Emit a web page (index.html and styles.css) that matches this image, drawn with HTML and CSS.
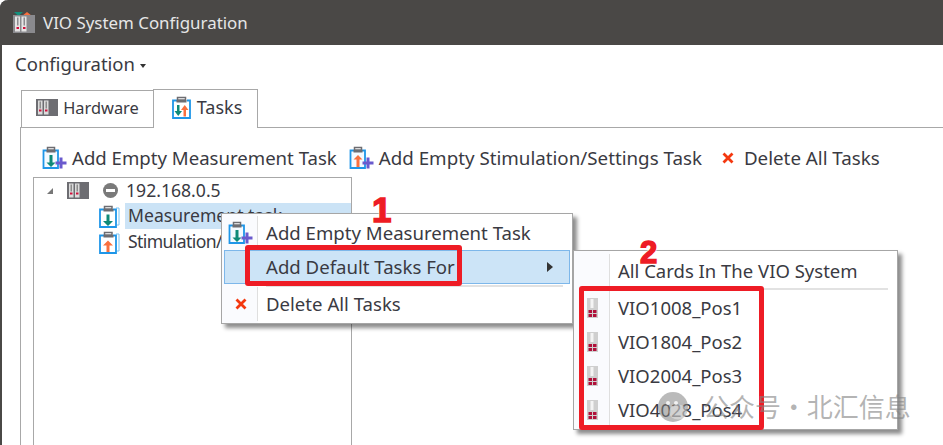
FILE: index.html
```html
<!DOCTYPE html>
<html lang="en">
<head>
<meta charset="UTF-8">
<meta name="viewport" content="width=device-width, initial-scale=1.0">
<title>VIO System Configuration</title>
<link rel="stylesheet" href="styles.css">
</head>
<body>
<svg class="defs" width="0" height="0">
  <symbol id="rack" viewBox="0 0 22 17">
    <rect width="22" height="17" fill="#6d6d72"/>
    <rect x="2" y="1.5" width="4.5" height="14" fill="#dcdcdc"/>
    <rect x="8" y="1.5" width="4.500" height="14" fill="#dcdcdc"/>
    <rect x="3.500" y="2.500" width="1.500" height="7" fill="#8c8c8c"/>
    <rect x="9.500" y="2.500" width="1.500" height="7" fill="#8c8c8c"/>
    <rect x="3" y="10.500" width="2.500" height="2" fill="#d0103c"/>
    <rect x="9" y="10.500" width="2.500" height="2" fill="#d0103c"/>
  </symbol>
  <symbol id="task-down" viewBox="0 0 24 24">
    <path d="M18 4h3v17h-2" fill="none" stroke="#7cc4f2"/>
    <path d="M6 5.500H2V23h16V5.500h-3" fill="#fff" stroke="#1e96e8" stroke-width="1.800"/>
    <path d="M6.500 5V2.500h7.500V5z" fill="#fff" stroke="#6d6d72" stroke-width="1.500"/>
    <rect x="5.500" y="5" width="10" height="2.500" fill="#6d6d72"/>
    <path d="M8.500 10.500h3v6.500H15l-5 5-5-5h3.500z" fill="#0f8a78"/>
  </symbol>
  <symbol id="task-up" viewBox="0 0 24 24">
    <path d="M18 4h3v17h-2" fill="none" stroke="#7cc4f2"/>
    <path d="M6 5.500H2V23h16V5.500h-3" fill="#fff" stroke="#1e96e8" stroke-width="1.800"/>
    <path d="M6.500 5V2.500h7.500V5z" fill="#fff" stroke="#6d6d72" stroke-width="1.500"/>
    <rect x="5.500" y="5" width="10" height="2.500" fill="#6d6d72"/>
    <path d="M8.500 22h3v-6.500H15l-5-5-5 5h3.500z" fill="#f9703e"/>
  </symbol>
  <symbol id="task-both" viewBox="0 0 20 23">
    <path d="M5 4.500H1V22h17V4.500h-3" fill="#fff" stroke="#1e96e8" stroke-width="1.800"/>
    <path d="M5.500 4V1.500h8V4z" fill="#fff" stroke="#6d6d72" stroke-width="1.500"/>
    <rect x="4.500" y="4" width="10" height="2.500" fill="#6d6d72"/>
    <path d="M5 9h2.500v6H10l-3.750 5-3.750-5H5z" fill="#0f8a78"/>
    <path d="M11.500 20.500H14v-6.500h2.500l-3.750-5L9 14h2.500z" fill="#f9703e"/>
  </symbol>
  <symbol id="add-down" viewBox="0 0 25 25">
    <path d="M5 4.500H1.500V22H16V4.500h-3" fill="#f4faff" stroke="#1e96e8" stroke-width="1.800"/>
    <path d="M5.500 4V1.500h7V4z" fill="#fff" stroke="#6d6d72" stroke-width="1.500"/>
    <rect x="4.500" y="4" width="9" height="2.500" fill="#6d6d72"/>
    <path d="M7.500 9h3v7.500H13.500L9 21l-4.500-4.500h3z" fill="#0f8a78"/>
    <rect x="13.500" y="15.500" width="11" height="3" fill="#6a5acd"/>
    <rect x="17.500" y="11.500" width="3" height="11" fill="#6a5acd"/>
  </symbol>
  <symbol id="add-up" viewBox="0 0 25 25">
    <path d="M5 4.500H1.500V22H16V4.500h-3" fill="#f4faff" stroke="#1e96e8" stroke-width="1.800"/>
    <path d="M5.500 4V1.500h7V4z" fill="#fff" stroke="#6d6d72" stroke-width="1.500"/>
    <rect x="4.500" y="4" width="9" height="2.500" fill="#6d6d72"/>
    <path d="M7.500 21h3v-7.500H13.500L9 9l-4.500 4.500h3z" fill="#f9703e"/>
    <rect x="13.500" y="15.500" width="11" height="3" fill="#6a5acd"/>
    <rect x="17.500" y="11.500" width="3" height="11" fill="#6a5acd"/>
  </symbol>
  <symbol id="cross" viewBox="0 0 12 12">
    <path d="M1.500 1.500l9 9M10.500 1.500l-9 9" stroke="#f4380f" stroke-width="2.800"/>
  </symbol>
  <symbol id="card" viewBox="0 0 11 20">
    <rect width="11" height="20" fill="#cfcfcf"/>
    <rect x="3.500" y="1" width="3" height="9" fill="#f4f4f4"/>
    <rect x="1.500" y="12" width="3.500" height="3" fill="#b0103a"/>
    <rect x="6" y="12" width="3.500" height="3" fill="#b0103a"/>
    <rect x="1.500" y="16" width="3.500" height="3" fill="#b0103a"/>
    <rect x="6" y="16" width="3.500" height="3" fill="#b0103a"/>
  </symbol>
</svg>

<div class="window">
  <div class="titlebar">
    <svg class="app-icon" width="22" height="22" viewBox="0 0 22 22">
      <path d="M1 0h9l-4.500 4z" fill="#12917e"/>
      <path d="M9 4l5-4 5 4z" fill="#f9703e"/>
      <rect y="3" width="22" height="18" fill="#8a8a8e"/>
      <rect x="2" y="4.500" width="5" height="15" fill="#e4e4e4"/>
      <rect x="8.500" y="4.500" width="5" height="15" fill="#e4e4e4"/>
      <rect x="4" y="5.500" width="1.500" height="8" fill="#8a8a8e"/>
      <rect x="10.500" y="5.500" width="1.500" height="8" fill="#8a8a8e"/>
      <rect x="3.500" y="15" width="2.500" height="2" fill="#d0103c"/>
      <rect x="10" y="15" width="2.500" height="2" fill="#d0103c"/>
    </svg>
    <span class="title">VIO System Configuration</span>
  </div>

  <div class="menubar">Configuration<span class="caret"></span></div>

  <div class="tabs">
    <div class="tab">
      <svg width="22" height="17"><use href="#rack"/></svg>
      <span>Hardware</span>
    </div>
    <div class="tab active">
      <svg width="20" height="23"><use href="#task-both"/></svg>
      <span>Tasks</span>
    </div>
  </div>

  <div class="panel">
    <div class="toolbar">
      <div class="tool"><svg width="25" height="25"><use href="#add-down"/></svg><span class="label">Add Empty Measurement Task</span></div>
      <div class="tool wide"><svg width="25" height="25"><use href="#add-up"/></svg><span class="label">Add Empty Stimulation/Settings Task</span></div>
      <div class="tool wide delete"><svg width="12" height="12"><use href="#cross"/></svg><span class="label">Delete All Tasks</span></div>
    </div>

    <div class="tree">
      <div class="node root">
        <span class="expander"></span>
        <svg width="22" height="17"><use href="#rack"/></svg>
        <span class="status"></span>
        <span class="label">192.168.0.5</span>
      </div>
      <div class="node child">
        <svg width="24" height="24"><use href="#task-down"/></svg>
        <span class="node-label selected">Measurement task</span>
      </div>
      <div class="node child">
        <svg width="24" height="24"><use href="#task-up"/></svg>
        <span class="node-label tight">Stimulation/Settings task</span>
      </div>
    </div>
  </div>
</div>

<div class="menu context-menu">
  <div class="menu-item">
    <span class="gutter"><svg width="25" height="25"><use href="#add-down"/></svg></span>
    <span class="label">Add Empty Measurement Task</span>
  </div>
  <div class="menu-item hot">
    <span class="gutter"></span>
    <span class="label">Add Default Tasks For</span>
    <span class="arrow"></span>
  </div>
  <div class="menu-sep"></div>
  <div class="menu-item">
    <span class="gutter"><svg width="12" height="12"><use href="#cross"/></svg></span>
    <span class="label">Delete All Tasks</span>
  </div>
</div>

<div class="menu sub-menu">
  <div class="menu-item">
    <span class="gutter"></span>
    <span class="label">All Cards In The VIO System</span>
  </div>
  <div class="menu-sep"></div>
  <div class="menu-item"><span class="gutter"><svg width="11" height="20"><use href="#card"/></svg></span><span class="label">VIO1008_Pos1</span></div>
  <div class="menu-item"><span class="gutter"><svg width="11" height="20"><use href="#card"/></svg></span><span class="label">VIO1804_Pos2</span></div>
  <div class="menu-item"><span class="gutter"><svg width="11" height="20"><use href="#card"/></svg></span><span class="label">VIO2004_Pos3</span></div>
  <div class="menu-item"><span class="gutter"><svg width="11" height="20"><use href="#card"/></svg></span><span class="label">VIO4028_Pos4</span></div>
</div>

<!-- red callouts on top of the menus -->
<div class="callout-box box-one"></div>
<div class="callout-box box-two"></div>
<div class="callout-num num-one">1</div>
<div class="callout-num num-two">2</div>

<div class="watermark">
  <svg width="32" height="30" viewBox="0 0 32 30">
    <circle cx="15" cy="15" r="15" fill="rgba(130, 130, 130, 0.55)"/>
    <circle cx="10" cy="11" r="2" fill="rgba(255, 255, 255, 0.8)"/>
    <circle cx="18" cy="11" r="2" fill="rgba(255, 255, 255, 0.8)"/>
    <ellipse cx="20" cy="20" rx="9" ry="7.500" fill="rgba(255, 255, 255, 0.35)"/>
  </svg>
  <span>公众号 · 北汇信息</span>
</div>
</body>
</html>
```

FILE: styles.css
```css
* {
  box-sizing: border-box;
}
html, body {
  height: 100%;
}
body {
  margin: 0;
  overflow: hidden;
  background-color: #fff;
  font-family: "Noto Sans", Arial, sans-serif;
  font-size: 18.6px;
  color: #3a3a42;
}
svg {
  display: block;
  flex: none;
}
.defs {
  position: absolute;
}
/* lifts text a pixel above the row's centre line */
.label {
  margin-bottom: 2px;
}
.window {
  height: 445px;
  border-left: 2px solid #4a4846;
  border-top-left-radius: 8px;
  display: flex;
  flex-direction: column;
}
.titlebar {
  height: 45px;
  margin-left: -2px;
  padding-left: 13px;
  background-color: #4a4846;
  border-top-left-radius: 8px;
  display: flex;
  align-items: center;
  gap: 8px;
  flex: none;
}
.title {
  color: #e6e6e6;
  font-size: 16.9px;
}
.menubar {
  height: 43px;
  padding: 5px 0 0 13px;
  font-size: 18.5px;
  line-height: 27px;
  flex: none;
}
.caret {
  display: inline-block;
  margin-left: 5px;
  vertical-align: 3px;
  border-top: 4px solid #333;
  border-left: 3.5px solid transparent;
  border-right: 3.5px solid transparent;
}
.tabs {
  height: 39px;
  margin-left: 19px;
  display: flex;
  align-items: flex-end;
  flex: none;
}
.tab {
  height: 37px;
  width: 133px;
  padding-bottom: 3px;
  border: 1px solid #a8a8a8;
  border-bottom: none;
  display: flex;
  align-items: center;
  justify-content: center;
  gap: 5px;
  background-color: #fff;
  font-size: 16.4px;
}
.tab.active {
  height: 39px;
  width: 105px;
  margin-left: -1px;
  margin-bottom: -1px;
  position: relative;
  padding: 0 0 4px 3px;
  font-size: 18px;
}
.panel {
  flex: 1;
  margin-left: 18px;
  border-top: 1px solid #a8a8a8;
  border-left: 1px solid #a8a8a8;
  padding: 14px 0 0 12px;
  display: flex;
  flex-direction: column;
}
.toolbar {
  height: 32px;
  margin-left: 9px;
  display: flex;
  align-items: center;
  gap: 12px;
  flex: none;
}
.tool {
  display: flex;
  align-items: center;
  gap: 5px;
  white-space: nowrap;
}
.tool.wide {
  font-size: 18.75px;
}
.tool.delete {
  gap: 10px;
  margin-left: 8px;
}
.tree {
  flex: 1;
  width: 319px;
  margin-top: 3px;
  border: 1px solid #a8a8a8;
  border-bottom: none;
  font-size: 17.6px;
}
.node {
  height: 26px;
  display: flex;
  align-items: center;
}
.root {
  height: 25px;
  padding-left: 13px;
}
.expander {
  width: 0;
  height: 0;
  margin-right: 14px;
  border-bottom: 6px solid #777;
  border-left: 6px solid transparent;
}
.status {
  width: 15px;
  height: 15px;
  margin: 0 8px 0 14px;
  border-radius: 50%;
  background-color: #7a7a7a;
  display: flex;
  align-items: center;
  justify-content: center;
}
.status::after {
  content: "";
  width: 9px;
  height: 3px;
  background-color: #fff;
}
.child {
  padding-left: 64px;
}
.node-label {
  margin-left: 3px;
  flex: 1;
  height: 26px;
  line-height: 24px;
  padding-left: 3px;
  white-space: nowrap;
}
.tight {
  letter-spacing: -0.6px;
}
.selected {
  background-color: #cbe3f6;
}
.menu {
  position: absolute;
  background-color: #fff;
  border: 1px solid #a6a6a6;
  box-shadow: 4px 4px 4px rgba(0, 0, 0, 0.45);
  padding: 2px;
  background-image: linear-gradient(#fafbfe, #fafbfe);
  background-repeat: no-repeat;
}
.context-menu {
  left: 221px;
  top: 213px;
  width: 352px;
  height: 111px;
  background-size: 36px 100%;
}
.sub-menu {
  left: 573px;
  top: 250px;
  width: 325px;
  height: 180px;
  padding-top: 3px;
  font-size: 18.5px;
  background-size: 36px 100%;
}
.menu-item {
  height: 34px;
  display: flex;
  align-items: center;
  white-space: nowrap;
  position: relative;
}
.gutter {
  width: 34px;
  height: 100%;
  margin-right: 8px;
  border-right: 1px solid #dfdfdf;
  display: flex;
  align-items: center;
  justify-content: center;
  flex: none;
}
.hot {
  background-color: #cce4f7;
  border: 1px solid #7db7ea;
}
.hot .gutter {
  border-right: none;
  width: 33px;
}
.arrow {
  position: absolute;
  right: 16px;
  top: 11px;
  border-left: 6px solid #333;
  border-top: 5px solid transparent;
  border-bottom: 5px solid transparent;
}
.menu-sep {
  height: 2px;
  margin: 1px 7px 0 42px;
  background-color: #e2e2e2;
}
.sub-menu .menu-sep {
  margin: 0 7px 1px 34px;
}
.callout-box {
  position: absolute;
  border: 5px solid #ee1c25;
  border-radius: 3px;
}
.box-one {
  left: 245px;
  top: 245px;
  width: 217px;
  height: 41px;
}
.box-two {
  left: 579px;
  top: 286px;
  width: 185px;
  height: 144px;
}
.callout-num {
  position: absolute;
  font-family: "Liberation Sans", Arial, sans-serif;
  font-weight: bold;
  line-height: 1;
  color: #ee1c25;
  -webkit-text-stroke: 1.5px #ee1c25;
  text-shadow: 1px 1px 1px #fff, -1px -1px 1px #fff, 1px -1px 1px #fff, -1px 1px 1px #fff;
}
.num-one {
  left: 372px;
  top: 192px;
  font-size: 35px;
}
.num-two {
  left: 640px;
  top: 237px;
  font-size: 31px;
}
.watermark {
  position: absolute;
  left: 658px;
  top: 392px;
  display: flex;
  gap: 13px;
  color: rgba(130, 130, 130, 0.6);
  font-family: "Noto Sans CJK SC", sans-serif;
  font-size: 26px;
  line-height: 28px;
  word-spacing: -6px;
}
```
